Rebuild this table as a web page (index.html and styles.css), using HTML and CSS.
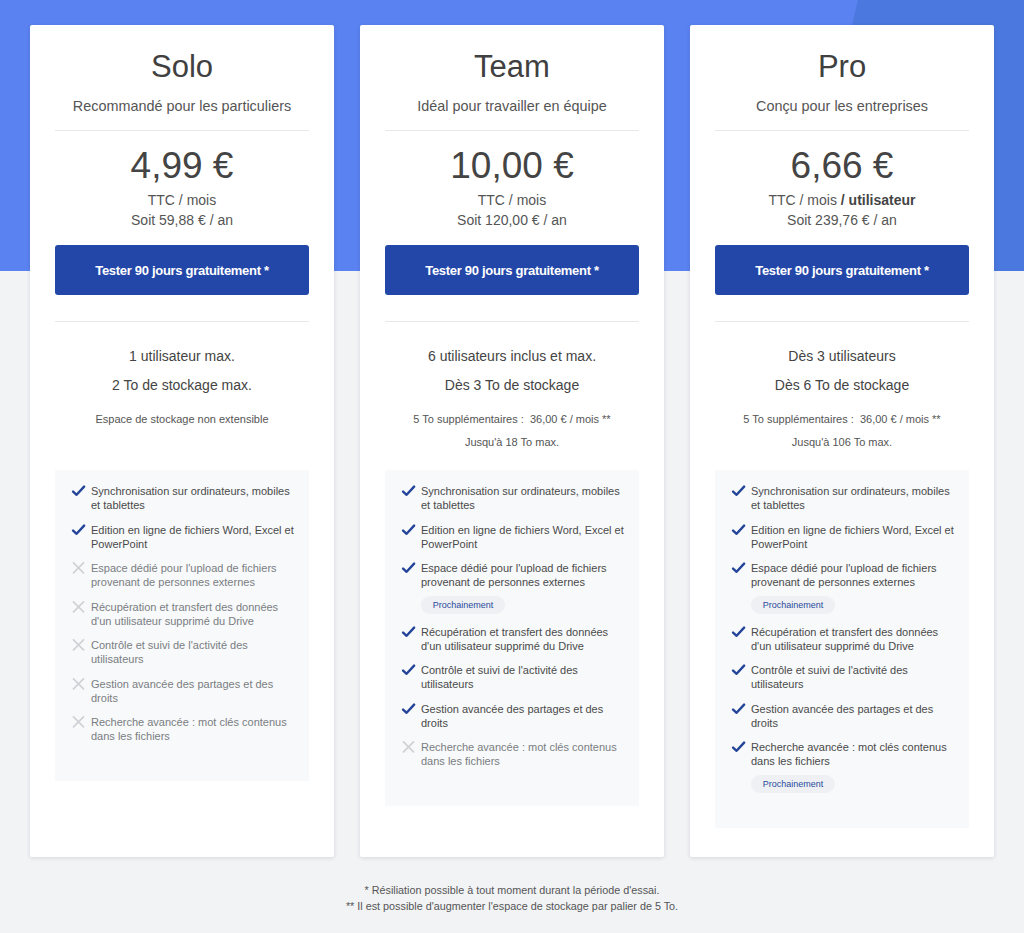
FILE: index.html
```html
<!DOCTYPE html>
<html lang="fr">
<head>
<meta charset="utf-8">
<title>Offres</title>
<link rel="stylesheet" href="styles.css">
</head>
<body>
<div class="page">
  <div class="band"></div>
  <div class="cards">
    <!-- Solo -->
    <section class="card">
      <h2 class="title">Solo</h2>
      <p class="subtitle">Recommandé pour les particuliers</p>
      <div class="pricing">
        <div class="price">4,99 €</div>
        <div class="per">TTC / mois</div>
        <div class="per">Soit 59,88 € / an</div>
      </div>
      <a class="cta" href="#">Tester 90 jours gratuitement *</a>
      <div class="info">
        <p class="info-main">1 utilisateur max.</p>
        <p class="info-main">2 To de stockage max.</p>
        <p class="info-small first">Espace de stockage non extensible</p>
      </div>
      <ul class="features">
        <li class="yes"><svg class="ic" viewBox="0 0 14 12"><path d="M1.6 6.6 L5.1 9.8 L12.6 1.6"/></svg><span>Synchronisation sur ordinateurs, mobiles et tablettes</span></li>
        <li class="yes"><svg class="ic" viewBox="0 0 14 12"><path d="M1.6 6.6 L5.1 9.8 L12.6 1.6"/></svg><span>Edition en ligne de fichiers Word, Excel et PowerPoint</span></li>
        <li class="no"><svg class="ic" viewBox="0 0 14 12"><path d="M2 0.8 L12 10.8 M12 0.8 L2 10.8"/></svg><span>Espace dédié pour l'upload de fichiers provenant de personnes externes</span></li>
        <li class="no"><svg class="ic" viewBox="0 0 14 12"><path d="M2 0.8 L12 10.8 M12 0.8 L2 10.8"/></svg><span>Récupération et transfert des données d'un utilisateur supprimé du Drive</span></li>
        <li class="no"><svg class="ic" viewBox="0 0 14 12"><path d="M2 0.8 L12 10.8 M12 0.8 L2 10.8"/></svg><span>Contrôle et suivi de l'activité des utilisateurs</span></li>
        <li class="no"><svg class="ic" viewBox="0 0 14 12"><path d="M2 0.8 L12 10.8 M12 0.8 L2 10.8"/></svg><span>Gestion avancée des partages et des droits</span></li>
        <li class="no"><svg class="ic" viewBox="0 0 14 12"><path d="M2 0.8 L12 10.8 M12 0.8 L2 10.8"/></svg><span>Recherche avancée : mot clés contenus dans les fichiers</span></li>
      </ul>
    </section>

    <!-- Team -->
    <section class="card">
      <h2 class="title">Team</h2>
      <p class="subtitle">Idéal pour travailler en équipe</p>
      <div class="pricing">
        <div class="price">10,00 €</div>
        <div class="per">TTC / mois</div>
        <div class="per">Soit 120,00 € / an</div>
      </div>
      <a class="cta" href="#">Tester 90 jours gratuitement *</a>
      <div class="info">
        <p class="info-main">6 utilisateurs inclus et max.</p>
        <p class="info-main">Dès 3 To de stockage</p>
        <p class="info-small first">5 To supplémentaires :&nbsp; 36,00 € / mois **</p>
        <p class="info-small">Jusqu'à 18 To max.</p>
      </div>
      <ul class="features">
        <li class="yes"><svg class="ic" viewBox="0 0 14 12"><path d="M1.6 6.6 L5.1 9.8 L12.6 1.6"/></svg><span>Synchronisation sur ordinateurs, mobiles et tablettes</span></li>
        <li class="yes"><svg class="ic" viewBox="0 0 14 12"><path d="M1.6 6.6 L5.1 9.8 L12.6 1.6"/></svg><span>Edition en ligne de fichiers Word, Excel et PowerPoint</span></li>
        <li class="yes"><svg class="ic" viewBox="0 0 14 12"><path d="M1.6 6.6 L5.1 9.8 L12.6 1.6"/></svg><span>Espace dédié pour l'upload de fichiers provenant de personnes externes<em class="badge">Prochainement</em></span></li>
        <li class="yes"><svg class="ic" viewBox="0 0 14 12"><path d="M1.6 6.6 L5.1 9.8 L12.6 1.6"/></svg><span>Récupération et transfert des données d'un utilisateur supprimé du Drive</span></li>
        <li class="yes"><svg class="ic" viewBox="0 0 14 12"><path d="M1.6 6.6 L5.1 9.8 L12.6 1.6"/></svg><span>Contrôle et suivi de l'activité des utilisateurs</span></li>
        <li class="yes"><svg class="ic" viewBox="0 0 14 12"><path d="M1.6 6.6 L5.1 9.8 L12.6 1.6"/></svg><span>Gestion avancée des partages et des droits</span></li>
        <li class="no"><svg class="ic" viewBox="0 0 14 12"><path d="M2 0.8 L12 10.8 M12 0.8 L2 10.8"/></svg><span>Recherche avancée : mot clés contenus dans les fichiers</span></li>
      </ul>
    </section>

    <!-- Pro -->
    <section class="card">
      <h2 class="title">Pro</h2>
      <p class="subtitle">Conçu pour les entreprises</p>
      <div class="pricing">
        <div class="price">6,66 €</div>
        <div class="per">TTC / mois <strong>/ utilisateur</strong></div>
        <div class="per">Soit 239,76 € / an</div>
      </div>
      <a class="cta" href="#">Tester 90 jours gratuitement *</a>
      <div class="info">
        <p class="info-main">Dès 3 utilisateurs</p>
        <p class="info-main">Dès 6 To de stockage</p>
        <p class="info-small first">5 To supplémentaires :&nbsp; 36,00 € / mois **</p>
        <p class="info-small">Jusqu'à 106 To max.</p>
      </div>
      <ul class="features">
        <li class="yes"><svg class="ic" viewBox="0 0 14 12"><path d="M1.6 6.6 L5.1 9.8 L12.6 1.6"/></svg><span>Synchronisation sur ordinateurs, mobiles et tablettes</span></li>
        <li class="yes"><svg class="ic" viewBox="0 0 14 12"><path d="M1.6 6.6 L5.1 9.8 L12.6 1.6"/></svg><span>Edition en ligne de fichiers Word, Excel et PowerPoint</span></li>
        <li class="yes"><svg class="ic" viewBox="0 0 14 12"><path d="M1.6 6.6 L5.1 9.8 L12.6 1.6"/></svg><span>Espace dédié pour l'upload de fichiers provenant de personnes externes<em class="badge">Prochainement</em></span></li>
        <li class="yes"><svg class="ic" viewBox="0 0 14 12"><path d="M1.6 6.6 L5.1 9.8 L12.6 1.6"/></svg><span>Récupération et transfert des données d'un utilisateur supprimé du Drive</span></li>
        <li class="yes"><svg class="ic" viewBox="0 0 14 12"><path d="M1.6 6.6 L5.1 9.8 L12.6 1.6"/></svg><span>Contrôle et suivi de l'activité des utilisateurs</span></li>
        <li class="yes"><svg class="ic" viewBox="0 0 14 12"><path d="M1.6 6.6 L5.1 9.8 L12.6 1.6"/></svg><span>Gestion avancée des partages et des droits</span></li>
        <li class="yes"><svg class="ic" viewBox="0 0 14 12"><path d="M1.6 6.6 L5.1 9.8 L12.6 1.6"/></svg><span>Recherche avancée : mot clés contenus dans les fichiers<em class="badge">Prochainement</em></span></li>
      </ul>
    </section>
  </div>
  <footer class="notes">
    <p>* Résiliation possible à tout moment durant la période d'essai.</p>
    <p>** Il est possible d'augmenter l'espace de stockage par palier de 5 To.</p>
  </footer>
</div>
</body>
</html>
```

FILE: styles.css
```css
* { box-sizing: border-box; }

html, body {
  margin: 0;
  padding: 0;
}

body {
  background: #f1f3f5;
  font-family: "Liberation Sans", Arial, sans-serif;
  color: #444;
}

.page {
  position: relative;
  min-height: 933px;
}

.band {
  position: absolute;
  left: 0;
  top: 0;
  right: 0;
  height: 271px;
  background: #5a82f0;
  z-index: 0;
}

.band::after {
  content: "";
  position: absolute;
  inset: 0;
  background: #4b78de;
  clip-path: polygon(858px 0, 100% 0, 100% 100%, 793px 100%);
}

.cards {
  position: relative;
  z-index: 1;
  display: flex;
  justify-content: center;
  align-items: stretch;
  gap: 26px;
  padding-top: 25px;
}

.card {
  width: 304px;
  background: #fff;
  border-radius: 2px;
  box-shadow: 0 1px 4px rgba(40, 50, 70, 0.14);
  padding: 22px 25px 29px;
  display: flex;
  flex-direction: column;
  align-items: stretch;
  text-align: center;
}

.title {
  margin: 0;
  font-size: 31px;
  line-height: 40px;
  font-weight: 400;
  color: #404040;
}

.subtitle {
  margin: 9px 0 0;
  padding-bottom: 14px;
  border-bottom: 1px solid #e6e8eb;
  font-size: 14.4px;
  line-height: 20px;
  color: #555;
}

.pricing {
  margin-top: 13px;
}

.price {
  font-size: 37px;
  line-height: 44px;
  font-weight: 400;
  color: #444;
}

.per {
  font-size: 14px;
  line-height: 20px;
  color: #555;
}

.price + .per {
  margin-top: 2px;
}

.per strong {
  font-weight: 700;
  color: #444;
}

.cta {
  display: flex;
  align-items: center;
  justify-content: center;
  margin-top: 15px;
  height: 50px;
  border-radius: 3px;
  background: #2347a8;
  color: #fff;
  text-decoration: none;
  font-size: 13px;
  font-weight: 700;
  letter-spacing: -0.3px;
}

.info {
  margin-top: 26px;
  border-top: 1px solid #e6e8eb;
  padding-top: 24px;
  height: 149px;
}

.info p {
  margin: 0;
}

.info-main {
  font-size: 14px;
  line-height: 20px;
  color: #444;
}

.info-main + .info-main {
  margin-top: 9px;
}

.info-small {
  font-size: 11px;
  line-height: 16px;
  color: #555;
  margin-top: 7px !important;
}

.info-small.first {
  margin-top: 16px !important;
}

.features {
  list-style: none;
  margin: 0;
  padding: 14px 10px 38px 16px;
  background: #f7f9fa;
  text-align: left;
  display: flex;
  flex-direction: column;
  gap: 10.5px;
}

.features li {
  display: flex;
  align-items: flex-start;
  gap: 5px;
  font-size: 11px;
  line-height: 14px;
}

.features li span {
  flex: 1;
}

.features .yes {
  color: #4a4a4a;
}

.features .no {
  color: #7a7d82;
}

.ic {
  flex: none;
  width: 15px;
  height: 12px;
  margin-top: 1px;
  fill: none;
  stroke-linecap: round;
  stroke-linejoin: round;
}

.yes .ic {
  stroke: #24449a;
  stroke-width: 2.4;
}

.no .ic {
  stroke: #cfd2d6;
  stroke-width: 1.7;
}

.badge {
  display: block;
  width: 84px;
  margin-top: 7px;
  height: 18px;
  line-height: 18px;
  border-radius: 9px;
  background: #eef0f3;
  color: #2b4a9c;
  font-style: normal;
  font-size: 9px;
  text-align: center;
}

.features li:last-child .badge {
  margin-bottom: -3px;
}

.notes {
  margin-top: 25px;
  text-align: center;
  font-size: 10.8px;
  line-height: 16px;
  color: #555;
}

.notes p {
  margin: 0;
}
```
